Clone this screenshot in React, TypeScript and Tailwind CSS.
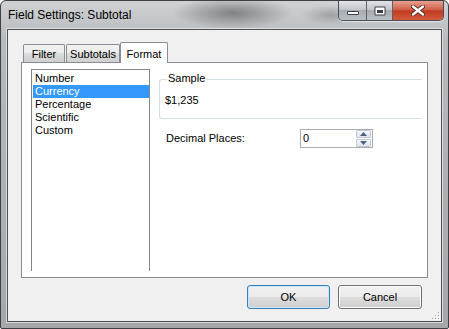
const dlg = "font-['Liberation_Sans',Arial,sans-serif] text-[11px] text-black";

function WindowButtons() {
  return (
    <div className="flex h-[20px] mr-[4px] rounded-b-[5px] border border-t-0 border-[#4a4e54] overflow-hidden shadow-[0_1px_0_rgba(255,255,255,0.55)]">
      <div className="w-[28px] flex items-end justify-center pb-[5px] border-r border-[#5c6167] bg-[linear-gradient(#dfe2e6,#c3c7cc_45%,#a7acb2_50%,#b9bec3)]">
        <div className="w-[12px] h-[4px] bg-white border border-[#3a3e44] rounded-[1px]" />
      </div>
      <div className="w-[26px] flex items-center justify-center pt-[0px] border-r border-[#5c6167] bg-[linear-gradient(#dfe2e6,#c3c7cc_45%,#a7acb2_50%,#b9bec3)]">
        <svg width="12" height="10" viewBox="0 0 12 10">
          <rect x="0.5" y="0.5" width="11" height="9" fill="#3a3e44" rx="1" />
          <rect x="1.5" y="1.5" width="9" height="7" fill="#fff" />
          <rect x="3" y="4" width="6" height="3" fill="#3a3e44" />
        </svg>
      </div>
      <div className="w-[50px] flex items-center justify-center bg-[linear-gradient(#e8a090,#d0614a_45%,#c23b21_52%,#d25a3c)]">
        <svg width="14" height="11" viewBox="0 0 14 11">
          <path d="M2 1.5 L12 9.5 M12 1.5 L2 9.5" stroke="#5a2a22" strokeWidth="4.2" strokeLinecap="round" />
          <path d="M2 1.5 L12 9.5 M12 1.5 L2 9.5" stroke="#ffffff" strokeWidth="2.4" strokeLinecap="round" />
        </svg>
      </div>
    </div>
  );
}

function Tab({ label, className }: { label: string; className: string }) {
  return (
    <div
      className={`h-[18px] flex items-center justify-center border border-b-0 border-[#898c95] rounded-t-[2px] bg-[linear-gradient(#f3f3f3,#ebebeb_50%,#dddddd_50%,#cfcfcf)] ${className}`}
    >
      <span className="pt-[1px]">{label}</span>
    </div>
  );
}

function Button({ label, primary }: { label: string; primary?: boolean }) {
  return (
    <div
      className={`h-[24px] flex items-center justify-center rounded-[3px] border bg-[linear-gradient(#f2f2f2,#ebebeb_50%,#dddddd_50%,#cfcfcf)] ${
        primary
          ? "w-[83px] border-[#3c7fb1] shadow-[inset_0_0_0_1px_#c6e6fa]"
          : "w-[84px] border-[#707070] shadow-[inset_0_0_0_1px_#fbfbfb]"
      }`}
    >
      {label}
    </div>
  );
}

export default function App() {
  const items = ["Number", "Currency", "Percentage", "Scientific", "Custom"];
  return (
    <div
      className={`w-[449px] h-[329px] flex flex-col border border-[#3d4045] rounded-t-[6px] rounded-b-[2px] overflow-hidden bg-[radial-gradient(60px_16px_at_232px_12px,rgba(70,70,70,0.55),transparent),radial-gradient(30px_10px_at_330px_14px,rgba(90,90,90,0.35),transparent),linear-gradient(#cfd1d3,#b7babd_40px,#a5a8ab)] ${dlg}`}
    >
      {/* title bar */}
      <div className="h-[28px] flex items-start justify-between">
        <span className="pl-[7px] h-[28px] flex items-center text-[12px] font-['Liberation_Sans',Arial,sans-serif]">
          Field Settings: Subtotal
        </span>
        <WindowButtons />
      </div>

      {/* client area */}
      <div className="mx-[6px] mb-[6px] flex-1 flex flex-col border border-[#4e5257] bg-[#f0f0f0] shadow-[0_0_0_1px_rgba(235,235,235,0.7)]">
        <div className="ml-[13px] mt-[12px] w-[407px] flex flex-col">
          {/* tab strip */}
          <div className="flex items-end h-[20px] pl-[2px] relative z-10">
            <Tab label="Filter" className="w-[42px]" />
            <Tab label="Subtotals" className="ml-[1px] w-[54px]" />
            <div className="w-[48px] h-[21px] -mb-px flex justify-center pt-[3px] bg-white border border-b-0 border-[#898c95] rounded-t-[2px]">
              Format
            </div>
          </div>

          {/* tab panel */}
          <div className="h-[216px] flex border border-[#898c95] bg-white pl-[9px] pt-[6px]">
            <div className="w-[119px] h-[202px] border border-b-0 border-[#828790] pt-[2px] pl-[1px]">
              {items.map((item) => (
                <div
                  key={item}
                  className={`h-[13px] leading-[13px] pl-[2px] ${
                    item === "Currency" ? "bg-[#3399ff] text-white" : ""
                  }`}
                >
                  {item}
                </div>
              ))}
            </div>

            <div className="ml-[9px] flex flex-col">
              <div className="relative mt-[10px] w-[263px] h-[40px] border border-r-0 border-[#d5dfe5] rounded-l-[3px] pl-[5px] pt-[14px]">
                <span className="absolute -top-[8px] left-[7px] px-[1px] bg-white leading-[13px]">Sample</span>
                <div className="leading-[13px]">$1,235</div>
              </div>

              <div className="mt-[10px] flex items-center pl-[7px]">
                <span className="w-[134px]">Decimal Places:</span>
                <div className="w-[73px] h-[19px] flex items-center justify-between border border-[#a9adb3] bg-white pl-[2px] pr-[1px]">
                  <span>0</span>
                  <div className="flex flex-col gap-[1px]">
                    <div className="w-[15px] h-[8px] flex items-center justify-center border border-[#c3cad3] rounded-[1px] bg-[linear-gradient(#f5f7f9,#dfe5ec)]">
                      <svg width="7" height="4" viewBox="0 0 7 4">
                        <path d="M0 4 L3.5 0 L7 4 Z" fill="#4b5f85" />
                      </svg>
                    </div>
                    <div className="w-[15px] h-[8px] flex items-center justify-center border border-[#c3cad3] rounded-[1px] bg-[linear-gradient(#f5f7f9,#dfe5ec)]">
                      <svg width="7" height="4" viewBox="0 0 7 4">
                        <path d="M0 0 L7 0 L3.5 4 Z" fill="#4b5f85" />
                      </svg>
                    </div>
                  </div>
                </div>
              </div>
            </div>
          </div>

          {/* dialog buttons */}
          <div className="mt-[7px] flex justify-end gap-[8px] pr-[6px]">
            <Button label="OK" primary />
            <Button label="Cancel" />
          </div>
        </div>

        {/* size grip */}
        <div className="mt-auto flex justify-end pr-[1px] pb-[1px]">
          <svg width="9" height="9" viewBox="0 0 9 9">
            {[
              [7, 1],
              [4, 4],
              [7, 4],
              [1, 7],
              [4, 7],
              [7, 7],
            ].map(([x, y]) => (
              <g key={`${x}-${y}`}>
                <rect x={x + 1} y={y + 1} width="1" height="1" fill="#ffffff" />
                <rect x={x} y={y} width="1" height="1" fill="#a0a0a0" />
              </g>
            ))}
          </svg>
        </div>
      </div>
    </div>
  );
}
